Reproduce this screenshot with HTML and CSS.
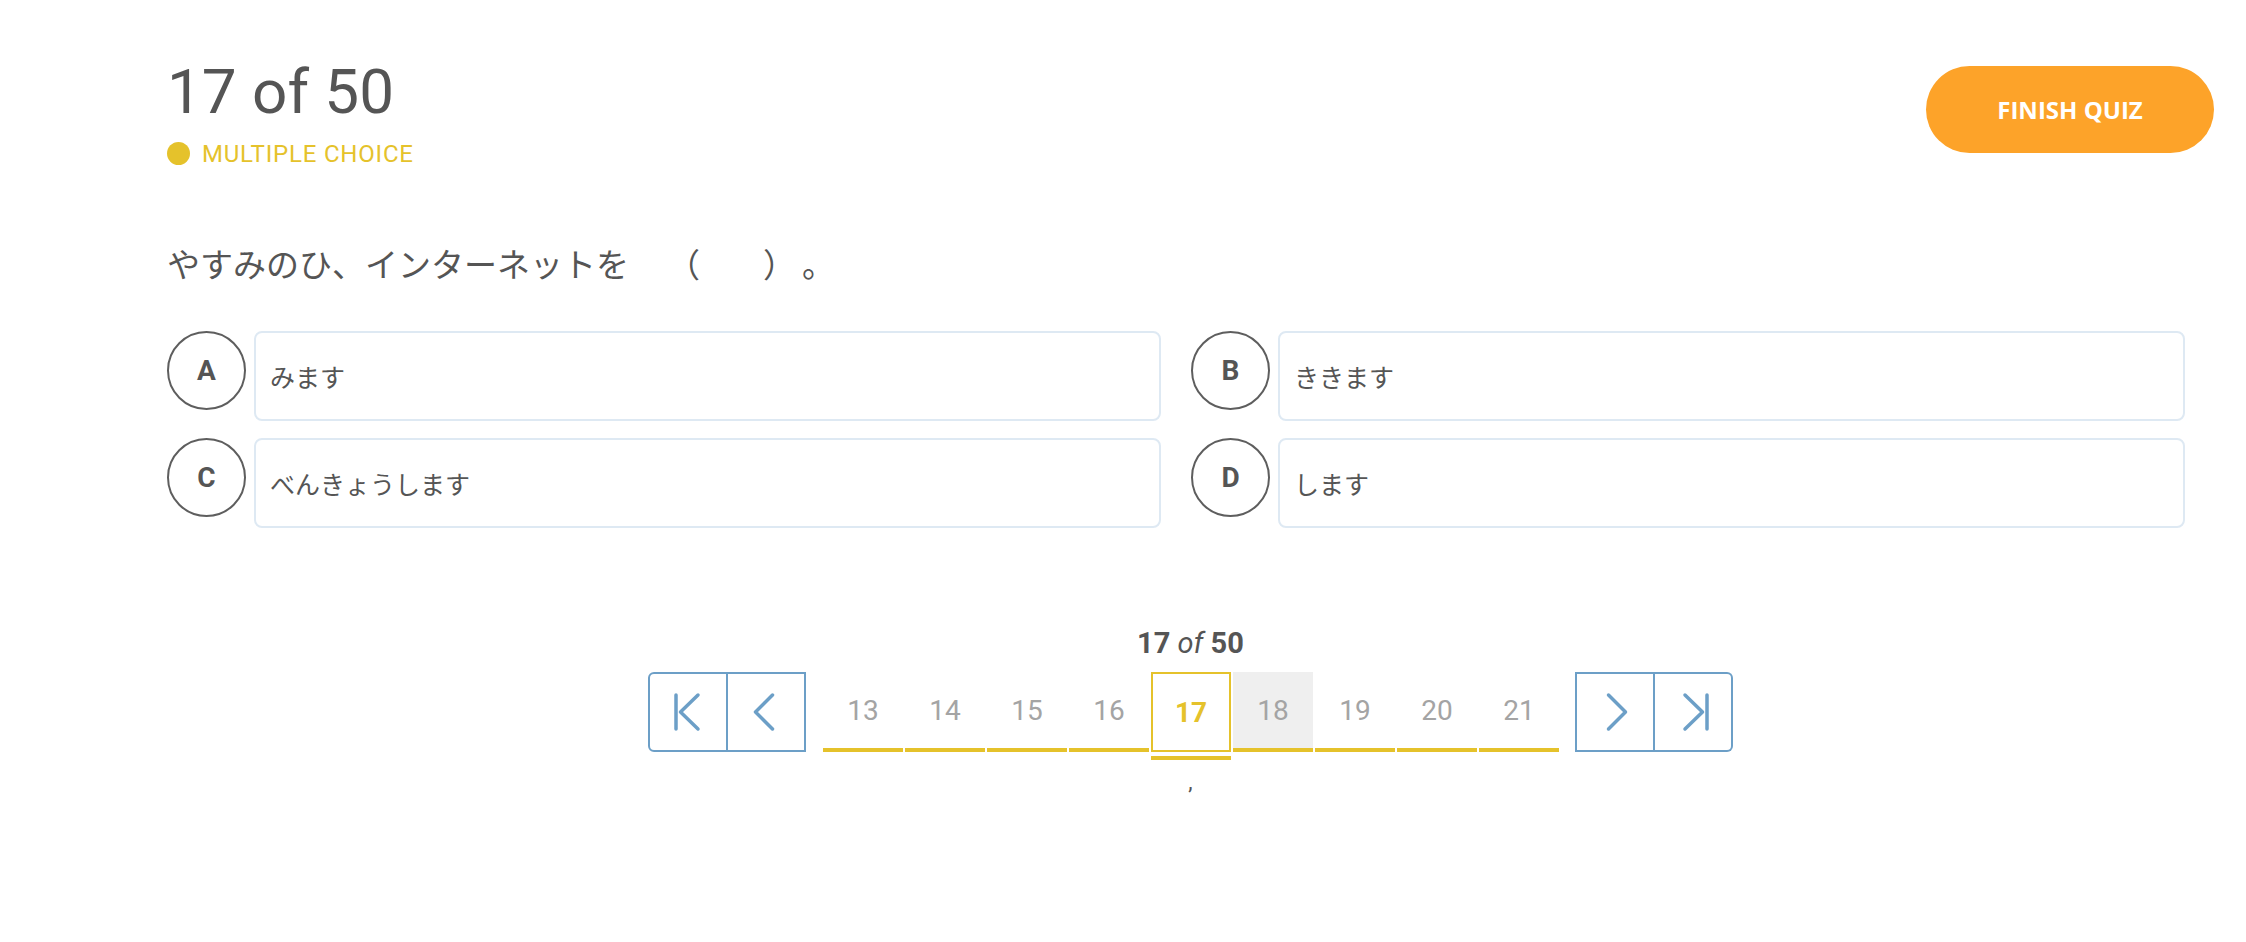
FILE: index.html
```html
<!DOCTYPE html>
<html lang="ja">
<head>
<meta charset="utf-8">
<title>Quiz</title>
<link rel="stylesheet" href="styles.css">
</head>
<body>
<div class="wrap">
  <header class="head">
    <div class="head-left">
      <h1 class="title">17 of 50</h1>
      <div class="type"><span class="type-dot"></span>MULTIPLE CHOICE</div>
    </div>
    <button class="finish">FINISH QUIZ</button>
  </header>

  <p class="question">やすみのひ、インターネットを<span class="gap"></span>（<span class="blank"></span>）<span class="stop">。</span></p>

  <div class="options">
    <div class="option"><div class="letter">A</div><div class="choice">みます</div></div>
    <div class="option"><div class="letter">B</div><div class="choice">ききます</div></div>
    <div class="option"><div class="letter">C</div><div class="choice">べんきょうします</div></div>
    <div class="option"><div class="letter">D</div><div class="choice">します</div></div>
  </div>

  <div class="pager">
    <div class="pager-label">17 <em>of</em> 50</div>
    <div class="pager-row">
      <div class="navgroup">
        <button class="navbtn first" aria-label="First">
          <svg width="30" height="40" viewBox="0 0 30 40"><path d="M3 3V37M25 3L7.5 20L25 37"/></svg>
        </button>
        <button class="navbtn prev" aria-label="Previous">
          <svg width="22" height="40" viewBox="0 0 22 40"><path d="M19.5 3L2.5 20L19.5 37"/></svg>
        </button>
      </div>
      <div class="pages">
        <div class="page">13</div>
        <div class="page">14</div>
        <div class="page">15</div>
        <div class="page">16</div>
        <div class="page active">17</div>
        <div class="page hover">18</div>
        <div class="page">19</div>
        <div class="page">20</div>
        <div class="page">21</div>
      </div>
      <div class="navgroup">
        <button class="navbtn next" aria-label="Next">
          <svg width="22" height="40" viewBox="0 0 22 40"><path d="M2.5 3L19.5 20L2.5 37"/></svg>
        </button>
        <button class="navbtn last" aria-label="Last">
          <svg width="30" height="40" viewBox="0 0 30 40"><path d="M5 3L22.5 20L5 37M27 3V37"/></svg>
        </button>
      </div>
    </div>
    <div class="pager-comma">,</div>
  </div>
</div>
</body>
</html>
```

FILE: styles.css
```css
html, body {
  margin: 0;
  padding: 0;
  background: #ffffff;
}

body {
  font-family: Roboto, "Noto Sans CJK JP", sans-serif;
  color: #555555;
}

.wrap {
  padding: 54px 32px 0 167px;
}

.head {
  display: flex;
  justify-content: space-between;
  align-items: flex-start;
}

.title {
  margin: 0;
  font-family: Roboto, sans-serif;
  font-size: 62px;
  line-height: 76px;
  font-weight: 400;
  color: #555555;
}

.type {
  display: flex;
  align-items: center;
  margin-top: 10px;
  height: 27px;
  font-family: Roboto, sans-serif;
  font-size: 24px;
  letter-spacing: 0.8px;
  color: #e5c22b;
}

.type-dot {
  width: 23px;
  height: 23px;
  border-radius: 50%;
  background: #e5c22b;
  margin-right: 12px;
  flex: none;
}

.finish {
  margin-top: 12px;
  width: 288px;
  height: 87px;
  border: none;
  border-radius: 44px;
  background: #fda329;
  color: #ffffff;
  font-family: "Open Sans", sans-serif;
  font-weight: 700;
  font-size: 24px;
  padding: 0;
  cursor: pointer;
}

.question {
  margin: 72px 0 0;
  font-family: "Noto Sans CJK JP", sans-serif;
  font-size: 33px;
  line-height: 48px;
  color: #555555;
  text-spacing-trim: space-all;
}

.gap {
  display: inline-block;
  width: 38px;
}

.blank {
  display: inline-block;
  width: 63px;
}

.stop {
  margin-left: 6px;
}

.options {
  margin-top: 44px;
  padding-right: 29px;
  display: grid;
  grid-template-columns: 1fr 1fr;
  column-gap: 30px;
  row-gap: 17px;
}

.option {
  display: flex;
  align-items: flex-start;
}

.letter {
  flex: none;
  box-sizing: border-box;
  width: 79px;
  height: 79px;
  border: 2px solid #5e5e5e;
  border-radius: 50%;
  display: flex;
  align-items: center;
  justify-content: center;
  margin-right: 8px;
  font-family: Roboto, sans-serif;
  font-weight: 700;
  font-size: 28px;
  color: #555555;
}

.choice {
  flex: 1;
  box-sizing: border-box;
  height: 90px;
  border: 2px solid #dee9f3;
  border-radius: 8px;
  display: flex;
  align-items: center;
  padding-left: 14px;
  font-family: "Noto Sans CJK JP", sans-serif;
  font-size: 25px;
  color: #555555;
}

.pager {
  margin-top: 99px;
  display: flex;
  flex-direction: column;
  align-items: center;
}

.pager-label {
  font-family: Roboto, sans-serif;
  font-weight: 700;
  font-size: 29px;
  line-height: 33px;
  color: #555555;
}

.pager-label em {
  font-weight: 400;
  font-style: italic;
}

.pager-row {
  margin-top: 12px;
  display: flex;
  align-items: flex-start;
}

.navgroup {
  display: flex;
}

.navbtn {
  box-sizing: border-box;
  width: 80px;
  height: 80px;
  padding: 0;
  margin: 0;
  border: 2px solid #6c9fc7;
  background: #ffffff;
  display: flex;
  align-items: center;
  justify-content: center;
  cursor: pointer;
}

.navbtn + .navbtn {
  border-left: none;
  width: 78px;
}

.navbtn.first {
  border-radius: 6px 0 0 6px;
}

.navbtn.last {
  border-radius: 0 6px 6px 0;
}

.navbtn.prev svg {
  margin-right: 4px;
}

.navbtn.next svg {
  margin-left: 4px;
}

.navbtn.last svg {
  margin-left: 3px;
}

.navbtn svg path {
  fill: none;
  stroke: #6c9fc7;
  stroke-width: 3.5;
  stroke-linecap: round;
  stroke-linejoin: round;
}

.pages {
  display: flex;
  gap: 2px;
  margin: 0 16px 0 17px;
}

.page {
  position: relative;
  box-sizing: border-box;
  width: 80px;
  height: 80px;
  border-bottom: 4px solid #e5c22b;
  display: flex;
  align-items: center;
  justify-content: center;
  font-family: Roboto, sans-serif;
  font-size: 28px;
  color: #a4a4a4;
}

.page.hover {
  background: #efefef;
}

.page.active {
  border: 2px solid #e5c22b;
  color: #e5c22b;
  font-weight: 700;
}

.page.active::after {
  content: "";
  position: absolute;
  left: -2px;
  right: -2px;
  bottom: -10px;
  height: 4px;
  background: #e5c22b;
}

.pager-comma {
  margin-top: 17px;
  font-family: Roboto, sans-serif;
  font-size: 22px;
  line-height: 26px;
  color: #555555;
}
```
